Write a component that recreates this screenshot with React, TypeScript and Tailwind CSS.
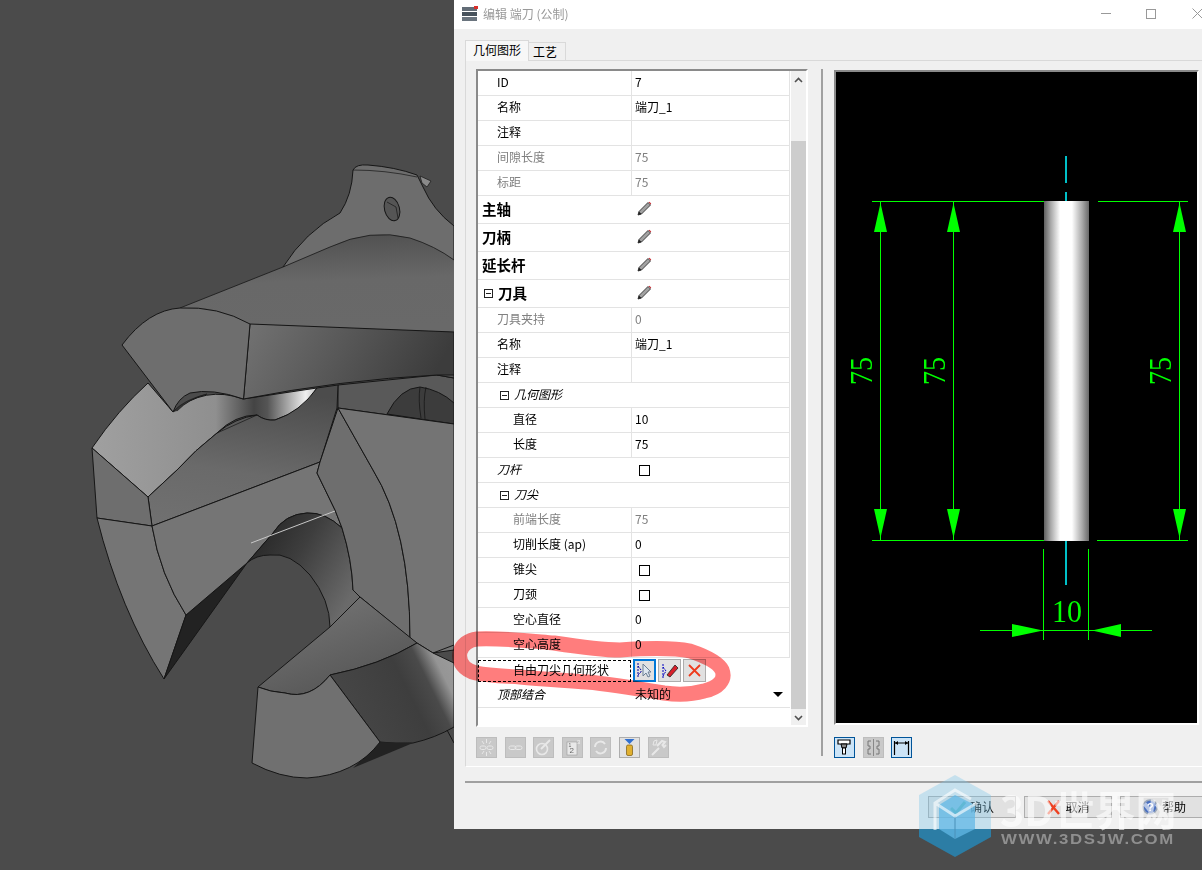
const cjk = { fontFamily: '"Noto Sans CJK SC", "Noto Sans", sans-serif' };

type RowProps = {
  label: string;
  value?: string;
  indent: string;
  tone?: 'normal' | 'muted' | 'italic' | 'bold';
  check?: boolean;
  pencil?: boolean;
  expander?: boolean;
  span?: boolean;
};

function Pencil() {
  return (
    <svg width="15" height="15" viewBox="0 0 15 15">
      <path d="M1 14 L2 10.5 L11 1.5 L13.5 4 L4.5 13 Z" fill="#a2a2a2" stroke="#2e2e2e" strokeWidth="0.9" />
      <path d="M11.6 1.2 L12.4 0.8 L14.2 2.6 L13.8 3.4 Z" fill="#c8242c" />
      <path d="M1 14 L2 10.5 L4.5 13 Z" fill="#222" />
    </svg>
  );
}

function Expander() {
  return (
    <span className="mt-[2px] flex h-[9px] w-[9px] items-center justify-center border border-[#222]">
      <span className="h-px w-[5px] bg-[#222]" />
    </span>
  );
}

function Row({ label, value, indent, tone = 'normal', check, pencil, expander, span }: RowProps) {
  const color = tone === 'muted' ? 'text-[#808080]' : 'text-black';
  const labelCls =
    tone === 'bold' ? 'text-[14.5px] font-bold' : tone === 'italic' ? 'text-[12px] italic' : 'text-[12px]';
  return (
    <div className={`flex border-b border-[#e3e3e3] ${tone === 'bold' ? 'h-[28px]' : 'h-[25px]'}`}>
      <div
        className={`flex w-[154px] shrink-0 items-center gap-[5px] pb-[2px] ${indent} ${color} ${labelCls} ${span ? '' : 'border-r border-[#e3e3e3]'}`}
      >
        {expander && <Expander />}
        <span className="whitespace-nowrap">{label}</span>
      </div>
      <div className={`flex w-[158px] items-center border-r border-[#e3e3e3] pb-[2px] pl-[3px] text-[12px] ${color}`}>
        {value}
        {check && <span className="mt-[2px] ml-[4px] h-[11px] w-[11px] border border-black bg-white" />}
        {pencil && (
          <span className="ml-[2px]">
            <Pencil />
          </span>
        )}
      </div>
    </div>
  );
}

function ToolButton({ kind, children }: { kind: 'off' | 'on' | 'active'; children: React.ReactNode }) {
  const cls =
    kind === 'off'
      ? 'bg-[#c9c9c9] border-[#bdbdbd]'
      : kind === 'on'
        ? 'bg-[#e1e1e1] border-[#adadad]'
        : 'bg-[#cce4f7] border-[#005499]';
  return (
    <div className={`flex h-[21px] w-[21px] items-center justify-center border ${cls}`}>
      <svg width="19" height="19" viewBox="0 0 19 19" fill="none">
        {children}
      </svg>
    </div>
  );
}

function GridToolbar() {
  const s = '#e8e8e8';
  return (
    <div className="mt-[10px] flex gap-[7.6px]">
      <ToolButton kind="off">
        <path d="M9.5 1v4M9.5 14v4M5 3l2 3M14 3l-2 3M5 16l2-3M14 16l-2-3" stroke={s} />
        <rect x="3" y="8" width="6" height="3.5" rx="1.7" stroke={s} />
        <rect x="10" y="8" width="6" height="3.5" rx="1.7" stroke={s} />
      </ToolButton>
      <ToolButton kind="off">
        <rect x="3" y="8" width="7" height="3.5" rx="1.7" stroke={s} />
        <rect x="9" y="8" width="7" height="3.5" rx="1.7" stroke={s} />
      </ToolButton>
      <ToolButton kind="off">
        <circle cx="8" cy="11" r="5.5" stroke={s} strokeWidth="1.6" />
        <path d="M7 11 L16 2" stroke={s} strokeWidth="2" />
      </ToolButton>
      <ToolButton kind="off">
        <rect x="4" y="4" width="10" height="13" fill={s} stroke="#999" strokeWidth="0.6" />
        <text x="6.5" y="15" fontSize="8" fill="#666" fontFamily="Liberation Sans">2</text>
        <text x="5.5" y="8.5" fontSize="5" fill="#666" fontFamily="Liberation Sans">1</text>
        <text x="14" y="6" fontSize="6" fill="#eee" fontFamily="Liberation Sans">3</text>
      </ToolButton>
      <ToolButton kind="off">
        <path d="M4 9 A5.5 5.5 0 0 1 14 6 M15 10 A5.5 5.5 0 0 1 5 13" stroke={s} strokeWidth="2" />
      </ToolButton>
      <ToolButton kind="on">
        <path d="M4.5 1 H14.5 L9.5 6 Z" fill="#2f6fd0" />
        <rect x="6.5" y="7" width="6" height="10.5" rx="1.5" fill="#e0b030" stroke="#7a5a10" strokeWidth="0.7" />
      </ToolButton>
      <ToolButton kind="off">
        <path d="M3 17 L10 10 M8 8 L13 3 L16 4 L13.5 7 L15 9 L17 7" stroke={s} strokeWidth="2" />
        <path d="M5 3 L8 2 L7 7 L4 7 Z" stroke={s} />
      </ToolButton>
    </div>
  );
}

function PreviewToolbar() {
  return (
    <div className="mt-[12px] flex gap-[7.6px]">
      <ToolButton kind="active">
        <path d="M3 2 H15 V6 H3 Z" fill="#fff" stroke="#000" strokeWidth="1.2" />
        <path d="M6 6 H12 L11 10 H7 Z" fill="#888" stroke="#000" />
        <rect x="7.5" y="10" width="3" height="6" fill="#fff" stroke="#000" />
      </ToolButton>
      <ToolButton kind="off">
        <path d="M9.5 1 V18" stroke="#888" />
        <path d="M7 3 H4 V8 H6 V11 H4 V16 H7 M12 3 H15 V8 H13 V11 H15 V16 H12" stroke="#777" />
      </ToolButton>
      <ToolButton kind="active">
        <path d="M2.5 3 V17 M16.5 3 V17" stroke="#000" strokeWidth="1.2" />
        <path d="M3 5 H16" stroke="#000" />
        <path d="M3 5 L6 3 V7 Z M16 5 L13 3 V7 Z" fill="#000" />
      </ToolButton>
    </div>
  );
}

function DimV({ x }: { x: number }) {
  return (
    <g>
      <path d={`M${x + 0.5} 201 V540`} stroke="#00ff00" />
      <path d={`M${x + 0.5} 203 L${x + 7} 232 H${x - 6} Z`} fill="#00ff00" />
      <path d={`M${x + 0.5} 538 L${x + 7} 509 H${x - 6} Z`} fill="#00ff00" />
    </g>
  );
}

function Preview() {
  const dim = { fontFamily: '"Liberation Serif", serif', fontSize: 32, fill: '#00ff00' };
  return (
    <div className="h-[655px] w-[365px] border-2 border-t-[#8a8a8a] border-r-white border-b-white border-l-[#8a8a8a] bg-black">
      <svg width="361" height="651" viewBox="836 72 361 651">
        <defs>
          <linearGradient id="tool" x1="0" x2="1" y1="0" y2="0">
            <stop offset="0" stopColor="#5f5f5f" />
            <stop offset="0.15" stopColor="#a8a8a8" />
            <stop offset="0.36" stopColor="#ffffff" />
            <stop offset="0.62" stopColor="#ffffff" />
            <stop offset="0.85" stopColor="#a8a8a8" />
            <stop offset="1" stopColor="#686868" />
          </linearGradient>
        </defs>
        <path d="M1066 156 V183 M1066 192 V201 M1066 541 V585" stroke="#00c0c8" strokeWidth="2" />
        <path d="M872 201.5 H1044 M1098 201.5 H1188 M872 540.5 H1044 M1097 540.5 H1188" stroke="#00ff00" />
        <rect x="1044" y="201" width="45" height="340" fill="url(#tool)" />
        <DimV x={880} />
        <DimV x={953} />
        <DimV x={1179} />
        <text {...dim} transform="translate(872 385) rotate(-90)" textLength="28" lengthAdjust="spacingAndGlyphs">75</text>
        <text {...dim} transform="translate(945 385) rotate(-90)" textLength="28" lengthAdjust="spacingAndGlyphs">75</text>
        <text {...dim} transform="translate(1171 385) rotate(-90)" textLength="28" lengthAdjust="spacingAndGlyphs">75</text>
        <text {...dim} x="1052" y="622" textLength="30" lengthAdjust="spacingAndGlyphs">10</text>
        <path d="M1043.5 549 V640 M1088.5 549 V640 M980 630.5 H1152" stroke="#00ff00" />
        <path d="M1043 630.5 L1012 624 V637 Z M1092 630.5 L1121 624 V637 Z" fill="#00ff00" />
      </svg>
    </div>
  );
}

function FootButton({ label, icon }: { label: string; icon: React.ReactNode }) {
  return (
    <div className="flex h-[22px] w-[88px] shrink-0 items-center justify-center gap-[4px] border border-[#adadad] bg-[#e1e1e1] text-[12px] text-black">
      {icon}
      <span>{label}</span>
    </div>
  );
}

function Model() {
  const edge = { stroke: '#161616', strokeWidth: 1, strokeLinejoin: 'round' as const };
  return (
    <svg width="454" height="870" viewBox="0 0 454 870" className="shrink-0">
      <defs>
        <linearGradient id="noseTop" x1="0.2" y1="0" x2="0.3" y2="1">
          <stop offset="0" stopColor="#4f4f4f" />
          <stop offset="0.5" stopColor="#686868" />
          <stop offset="1" stopColor="#696969" />
        </linearGradient>
        <linearGradient id="noseSide" x1="0" y1="0" x2="1" y2="0.2">
          <stop offset="0" stopColor="#737373" />
          <stop offset="0.5" stopColor="#585858" />
          <stop offset="1" stopColor="#3c3c3c" />
        </linearGradient>
        <linearGradient id="light" x1="0" y1="0" x2="1" y2="0">
          <stop offset="0" stopColor="#a0a0a0" />
          <stop offset="0.55" stopColor="#8f8f8f" />
          <stop offset="0.72" stopColor="#444444" />
          <stop offset="0.78" stopColor="#555555" />
          <stop offset="0.95" stopColor="#f0f0f0" />
          <stop offset="1" stopColor="#c0c0c0" />
        </linearGradient>
        <linearGradient id="mid" x1="0.5" y1="0" x2="0.3" y2="1">
          <stop offset="0" stopColor="#4c4c4c" />
          <stop offset="0.6" stopColor="#6a6a6a" />
          <stop offset="1" stopColor="#707070" />
        </linearGradient>
        <linearGradient id="bore" x1="0" y1="0" x2="1" y2="0.6">
          <stop offset="0" stopColor="#1e1e1e" />
          <stop offset="0.5" stopColor="#3e3e3e" />
          <stop offset="1" stopColor="#6a6a6a" />
        </linearGradient>
        <linearGradient id="lowerDark" x1="0" y1="0.5" x2="1" y2="0.1">
          <stop offset="0" stopColor="#474747" />
          <stop offset="0.55" stopColor="#3e3e3e" />
          <stop offset="0.72" stopColor="#4a4a4a" />
          <stop offset="0.85" stopColor="#959595" />
          <stop offset="1" stopColor="#9c9c9c" />
        </linearGradient>
        <linearGradient id="step" x1="0.2" y1="0" x2="0.8" y2="1">
          <stop offset="0" stopColor="#767676" />
          <stop offset="1" stopColor="#525252" />
        </linearGradient>
      </defs>
      <rect width="454" height="870" fill="#4b4b4b" />

      {/* top lobe */}
      <path d="M283 267 Q305 232 340 213 Q352 195 353 170 Q356 164 368 165 Q395 167 417 175 L423 187 Q433 210 454 226 V262 L283 267 Z" fill="#6d6d6d" {...edge} />
      <path d="M353 170 Q385 170 417 177" fill="none" {...edge} strokeWidth={0.7} />
      <path d="M420 176 L431 181 L427 187 L422 183 Z" fill="#8a8a8a" {...edge} strokeWidth={0.7} />
      <ellipse cx="392" cy="209" rx="7.5" ry="12" transform="rotate(-15 392 209)" fill="#555" {...edge} />
      <path d="M387 202 L396 207 L398 218" fill="none" {...edge} strokeWidth={0.7} />

      {/* nose */}
      <path d="M180 308 L283 267 L330 247 Q370 228 410 238 Q435 246 454 260 V332 L250 324 Q215 305 180 308 Z" fill="url(#noseTop)" />
      <path d="M180 308 L283 267 L330 247 Q370 228 410 238 Q435 246 454 260" fill="none" stroke="#161616" strokeWidth="0.8" />

      {/* back band and bore top */}
      <path d="M338 385 L437 375 L454 378 V424 L338 408 Z" fill="#595959" {...edge} />
      <path d="M437 375 L454 357 V378 Z" fill="#555" {...edge} />
      <path d="M387 414 Q400 388 420 387 Q440 390 454 403 V424 Z" fill="#3c3c3c" {...edge} />
      <path d="M420 387 Q418 400 421 418 M426 387 Q423 400 425 419" fill="none" {...edge} strokeWidth={0.8} />

      {/* light band */}
      <path d="M92 448 Q118 410 148 383 L173 412 Q205 385 243 399 L317 388 Q305 410 275 420 Q265 421 257 415 Q235 415 217 433 Q195 450 177 470 L148 497 Z" fill="url(#light)" {...edge} />
      <path d="M173 412 Q183 400 207 394 Q190 398 177 411" fill="#333" stroke="#161616" strokeWidth="0.6" />

      {/* mid face */}
      <path d="M148 497 L177 470 Q195 450 217 433 Q235 418 257 415 Q265 421 275 420 Q300 412 317 388 L338 385 L337 408 L320 462 L152 526 Z" fill="url(#mid)" {...edge} />
      <path d="M217 433 L257 415" fill="none" {...edge} strokeWidth={0.7} />

      {/* nose front + side on top of band */}
      <path d="M250 324 L454 332 V375 L437 375 Q340 380 243.5 399 Z" fill="url(#noseSide)" {...edge} />
      <path d="M122 345 Q148 310 180 308 Q218 306 250 324 L243.5 399 Q212 388 190 393 Q178 398 173 412 Z" fill="#6e6e6e" {...edge} />

      {/* left wedge */}
      <path d="M92 448 L148 497 L152 526 L97 518 Z" fill="#6e6e6e" {...edge} />
      <path d="M97 518 Q120 610 164 679 L186 615 Q160 575 152 526 Z" fill="#757575" {...edge} />
      <path d="M186 615 L164 679 L247 563 Z" fill="#222222" {...edge} />

      {/* centre face */}
      <path d="M152 526 L320 462 L317 473 L335 510 L342 528 Q325 512 307 513 Q285 514 273 533 L247 563 L186 615 Q160 575 152 526 Z" fill="#757575" {...edge} />

      {/* bore */}
      <path d="M247 563 L273 533 Q285 514 307 513 Q325 512 342 528 Q352 560 353 590 L360 597 L330 627 Q330 600 310 575 Q290 552 270 555 Q256 555 247 563 Z" fill="url(#bore)" {...edge} />
      <path d="M251 543 L335 511" stroke="#c8c8c8" strokeWidth="1" />

      {/* right arch */}
      <path d="M338 408 L320 462 L317 473 L335 510 L342 528 Q352 560 353 590 L360 597 L410 638 Q410 530 373 470 Z" fill="#6e6e6e" {...edge} />
      <path d="M338 408 L454 424 V650 L433 653 L417 643 L410 638 Q410 530 373 470 Z" fill="#747474" {...edge} />

      {/* lower step */}
      <path d="M258 687 L330 627 L360 597 L417 643 Q380 665 330 675 Q310 700 285 693 Q270 692 258 687 Z" fill="url(#step)" {...edge} />
      <path d="M330 675 Q380 665 417 643 L433 653 L454 663 V727 Q435 738 413 743 Q395 744 380 742 Z" fill="url(#lowerDark)" {...edge} />
      <path d="M433 653 L454 645" fill="none" {...edge} />
      <path d="M447 730 L454 743" fill="none" {...edge} />
      <path d="M380 742 L413 743 L353 768 Z" fill="#222222" />
      <path d="M258 687 Q270 692 285 693 Q310 700 330 675 L380 742 Q355 775 307 778 Q280 778 252 763 Z" fill="#707070" {...edge} />
    </svg>
  );
}

export default function App() {
  return (
    <div className="relative flex h-[870px] w-[1202px] overflow-hidden bg-[#4b4b4b]" style={cjk}>
      <Model />

      {/* dialog */}
      <div className="flex h-[829px] w-[760px] shrink-0 flex-col bg-[#f0f0f0]">
        <div className="flex h-[29px] shrink-0 items-center bg-white pb-[2px] pl-[8px]">
          <svg width="17" height="15" viewBox="0 0 17 15" className="shrink-0">
            <rect x="0" y="1" width="15" height="4" fill="#626c76" />
            <rect x="0" y="6" width="15" height="4" fill="#47525c" />
            <rect x="0" y="11" width="15" height="4" fill="#6a747e" />
            <rect x="12" y="0" width="4" height="3" fill="#d9302c" />
          </svg>
          <span className="ml-[4px] text-[12px] text-[#999999]">编辑 端刀 (公制)</span>
          <span className="ml-[532px] h-px w-[10px] bg-[#999999]" />
          <span className="ml-[35px] h-[10px] w-[10px] border border-[#999999]" />
          <svg width="11" height="11" viewBox="0 0 11 11" className="ml-[36px] shrink-0">
            <path d="M0.5 0.5 L10.5 10.5 M10.5 0.5 L0.5 10.5" stroke="#999999" />
          </svg>
        </div>

        <div className="pl-[11px] pt-[11px]">
          <div className="relative z-10 flex items-end">
            <div className="flex h-[21px] w-[64px] items-center justify-center border border-b-0 border-[#d9d9d9] bg-[#f7f7f7] pb-[2px] text-[12px] text-black">
              几何图形
            </div>
            <div className="mb-px flex h-[18px] w-[37px] items-center justify-center border border-b-0 border-l-0 border-[#d9d9d9] bg-[#f0f0f0] pr-[4px] text-[12px] text-black">
              工艺
            </div>
          </div>

          {/* tab panel */}
          <div className="-mt-px flex h-[707px] border border-r-0 border-[#d9d9d9] border-b-white pl-[10px] pt-[8px]">
            <div className="w-[332px] shrink-0">
              <div className="flex h-[658px] border-2 border-t-[#8a8a8a] border-r-white border-b-white border-l-[#8a8a8a] bg-white">
                <div className="w-[312px] shrink-0">
                  <Row label="ID" value="7" indent="pl-[19px]" />
                  <Row label="名称" value="端刀_1" indent="pl-[19px]" />
                  <Row label="注释" indent="pl-[19px]" />
                  <Row label="间隙长度" value="75" indent="pl-[19px]" tone="muted" />
                  <Row label="标距" value="75" indent="pl-[19px]" tone="muted" />
                  <Row label="主轴" indent="pl-[4px]" tone="bold" pencil span />
                  <Row label="刀柄" indent="pl-[4px]" tone="bold" pencil span />
                  <Row label="延长杆" indent="pl-[4px]" tone="bold" pencil span />
                  <Row label="刀具" indent="pl-[6px]" tone="bold" pencil span expander />
                  <Row label="刀具夹持" value="0" indent="pl-[19px]" tone="muted" />
                  <Row label="名称" value="端刀_1" indent="pl-[19px]" />
                  <Row label="注释" indent="pl-[19px]" />
                  <Row label="几何图形" indent="pl-[22px]" tone="italic" span expander />
                  <Row label="直径" value="10" indent="pl-[35px]" />
                  <Row label="长度" value="75" indent="pl-[35px]" />
                  <Row label="刀杆" indent="pl-[19px]" tone="italic" check span />
                  <Row label="刀尖" indent="pl-[22px]" tone="italic" span expander />
                  <Row label="前端长度" value="75" indent="pl-[35px]" tone="muted" />
                  <Row label="切削长度 (ap)" value="0" indent="pl-[35px]" />
                  <Row label="锥尖" indent="pl-[35px]" check />
                  <Row label="刀颈" indent="pl-[35px]" check />
                  <Row label="空心直径" value="0" indent="pl-[35px]" />
                  <Row label="空心高度" value="0" indent="pl-[35px]" />

                  <div className="flex h-[25px] items-center">
                    <div className="flex h-[22px] w-[153px] shrink-0 items-center border border-dashed border-black pb-[2px] pl-[34px] text-[12px] text-black">
                      自由刀尖几何形状
                    </div>
                    <div className="ml-[2px] flex gap-[2px]">
                      <div className="flex h-[23px] w-[23px] items-center justify-center border-2 border-[#0078d7] bg-[#e1e1e1]">
                        <svg width="17" height="17" viewBox="0 0 17 17" fill="none">
                          <path d="M2 1 V16 M2 4 L5 8 V10 L2 13" stroke="#0000a0" strokeDasharray="2 1" />
                          <path d="M7 2 V14 L10 11 L12 15 L14 14 L12 10 H15 Z" fill="#dfe8f0" stroke="#6a7f95" />
                        </svg>
                      </div>
                      <div className="flex h-[23px] w-[23px] items-center justify-center border border-[#adadad] bg-[#e1e1e1]">
                        <svg width="19" height="19" viewBox="0 0 19 19" fill="none">
                          <path d="M3 3 V17 M3 6 L6 10 L3 15" stroke="#0000c0" strokeDasharray="2 1" />
                          <path d="M7 14 L15 4 L18 7 L10 16 Z" fill="#d8202a" stroke="#222" strokeWidth="0.8" />
                        </svg>
                      </div>
                      <div className="flex h-[23px] w-[23px] items-center justify-center border border-[#adadad] bg-[#e1e1e1]">
                        <svg width="15" height="15" viewBox="0 0 15 15">
                          <path d="M2 2 L13 13 M13 2 L2 13" stroke="#ee3a1c" strokeWidth="1.8" />
                        </svg>
                      </div>
                    </div>
                  </div>

                  <div className="flex h-[25px] border-b border-[#e3e3e3]">
                    <div className="flex w-[154px] shrink-0 items-center pb-[2px] pl-[19px] text-[12px] italic text-black">顶部结合</div>
                    <div className="flex w-[157px] items-center justify-between pb-[2px] pl-[3px] pr-[6px] text-[12px] text-black">
                      <span>未知的</span>
                      <span className="h-0 w-0 border-x-[5px] border-t-[5px] border-x-transparent border-t-black" />
                    </div>
                  </div>
                </div>

                {/* scrollbar */}
                <div className="ml-px flex w-[15px] shrink-0 flex-col bg-[#f0f0f0]">
                  <div className="flex h-[70px] shrink-0 justify-center pt-[6px]">
                    <svg width="9" height="6" viewBox="0 0 9 6">
                      <path d="M1 5 L4.5 1.5 L8 5" fill="none" stroke="#505050" strokeWidth="1.6" />
                    </svg>
                  </div>
                  <div className="h-[568px] shrink-0 bg-[#cdcdcd]" />
                  <div className="flex justify-center pt-[6px]">
                    <svg width="9" height="6" viewBox="0 0 9 6">
                      <path d="M1 1 L4.5 4.5 L8 1" fill="none" stroke="#505050" strokeWidth="1.6" />
                    </svg>
                  </div>
                </div>
              </div>
              <GridToolbar />
            </div>

            <div className="ml-[13px] h-[687px] w-[2px] shrink-0 bg-[#a0a0a0]" />

            <div className="ml-[11px] shrink-0 pt-px">
              <Preview />
              <PreviewToolbar />
            </div>
          </div>

          {/* bottom bar */}
          <div className="mt-[14px] h-[2px] bg-[#a0a0a0]" />
          <div className="mt-[13px] flex gap-[8px] pl-[463px]">
            <FootButton
              label="确认"
              icon={
                <svg width="16" height="14" viewBox="0 0 16 14">
                  <path d="M1 8 L6 13 L15 2" fill="none" stroke="#4fb37a" strokeWidth="3" />
                </svg>
              }
            />
            <FootButton
              label="取消"
              icon={
                <svg width="15" height="15" viewBox="0 0 15 15">
                  <path d="M2 1 L13 14 M13 1 L2 14" stroke="#ee4020" strokeWidth="2.4" />
                </svg>
              }
            />
            <FootButton
              label="帮助"
              icon={
                <svg width="16" height="16" viewBox="0 0 16 16">
                  <circle cx="8" cy="8" r="7" fill="#4a70c0" stroke="#9aa6b8" strokeWidth="1.6" />
                  <text x="5" y="12" fontSize="11" fontWeight="700" fill="#fff" fontFamily="Liberation Sans">?</text>
                </svg>
              }
            />
          </div>
        </div>
      </div>

      {/* red marker stroke */}
      <svg width="1202" height="870" viewBox="0 0 1202 870" className="pointer-events-none absolute inset-0 mix-blend-multiply">
        <path
          d="M477 639 C505 638 530 641 554 643 C580 647 600 650 620 650 C650 648 675 648 690 651 C705 656 718 662 722 670 C726 680 718 688 704 691 C690 695 678 695 664 693 C640 689 610 684 587 682 C560 680 540 679 520 677 C505 676 490 676 476 673 C464 670 458 662 460 652 C462 645 468 640 477 639 Z"
          fill="none"
          stroke="#ff7d7d"
          strokeWidth="15"
        />
      </svg>

      {/* watermark */}
      <div className="pointer-events-none absolute left-[919px] top-[775px] h-[82px] w-[72px]">
        <svg width="72" height="82" viewBox="0 0 72 82">
          <path d="M36 0 L72 20 V54 H0 V20 Z" fill="#79c4ea" fillOpacity="0.36" />
          <path d="M0 54 L0 62 L36 82 L72 62 V54 H0 Z" fill="#2a80aa" fillOpacity="0.95" />
          <path d="M20 30 L36 20 L56 30 V54 L36 64 L20 54 Z" fill="#62b8e6" fillOpacity="0.75" />
          <path d="M36 41 V64" stroke="#4a90b8" strokeWidth="1" />
          <path d="M16 55 V28 L36 15 L52 24 M16 28 L36 41 L58 28" fill="none" stroke="#ffffff" strokeOpacity="0.6" strokeWidth="3" />
        </svg>
      </div>
      <div className="pointer-events-none absolute left-[1000px] top-[782px] text-[41px] leading-[52px] font-bold whitespace-nowrap text-white/60">
        3D世界网
      </div>
      <div
        className="pointer-events-none absolute left-[1001px] top-[830px] origin-left scale-x-[1.2] text-[14px] leading-[18px] font-bold tracking-[1.4px] whitespace-nowrap text-[#8f8f8f]"
        style={{ fontFamily: '"Liberation Sans", sans-serif' }}
      >
        WWW.3DSJW.COM
      </div>
    </div>
  );
}
